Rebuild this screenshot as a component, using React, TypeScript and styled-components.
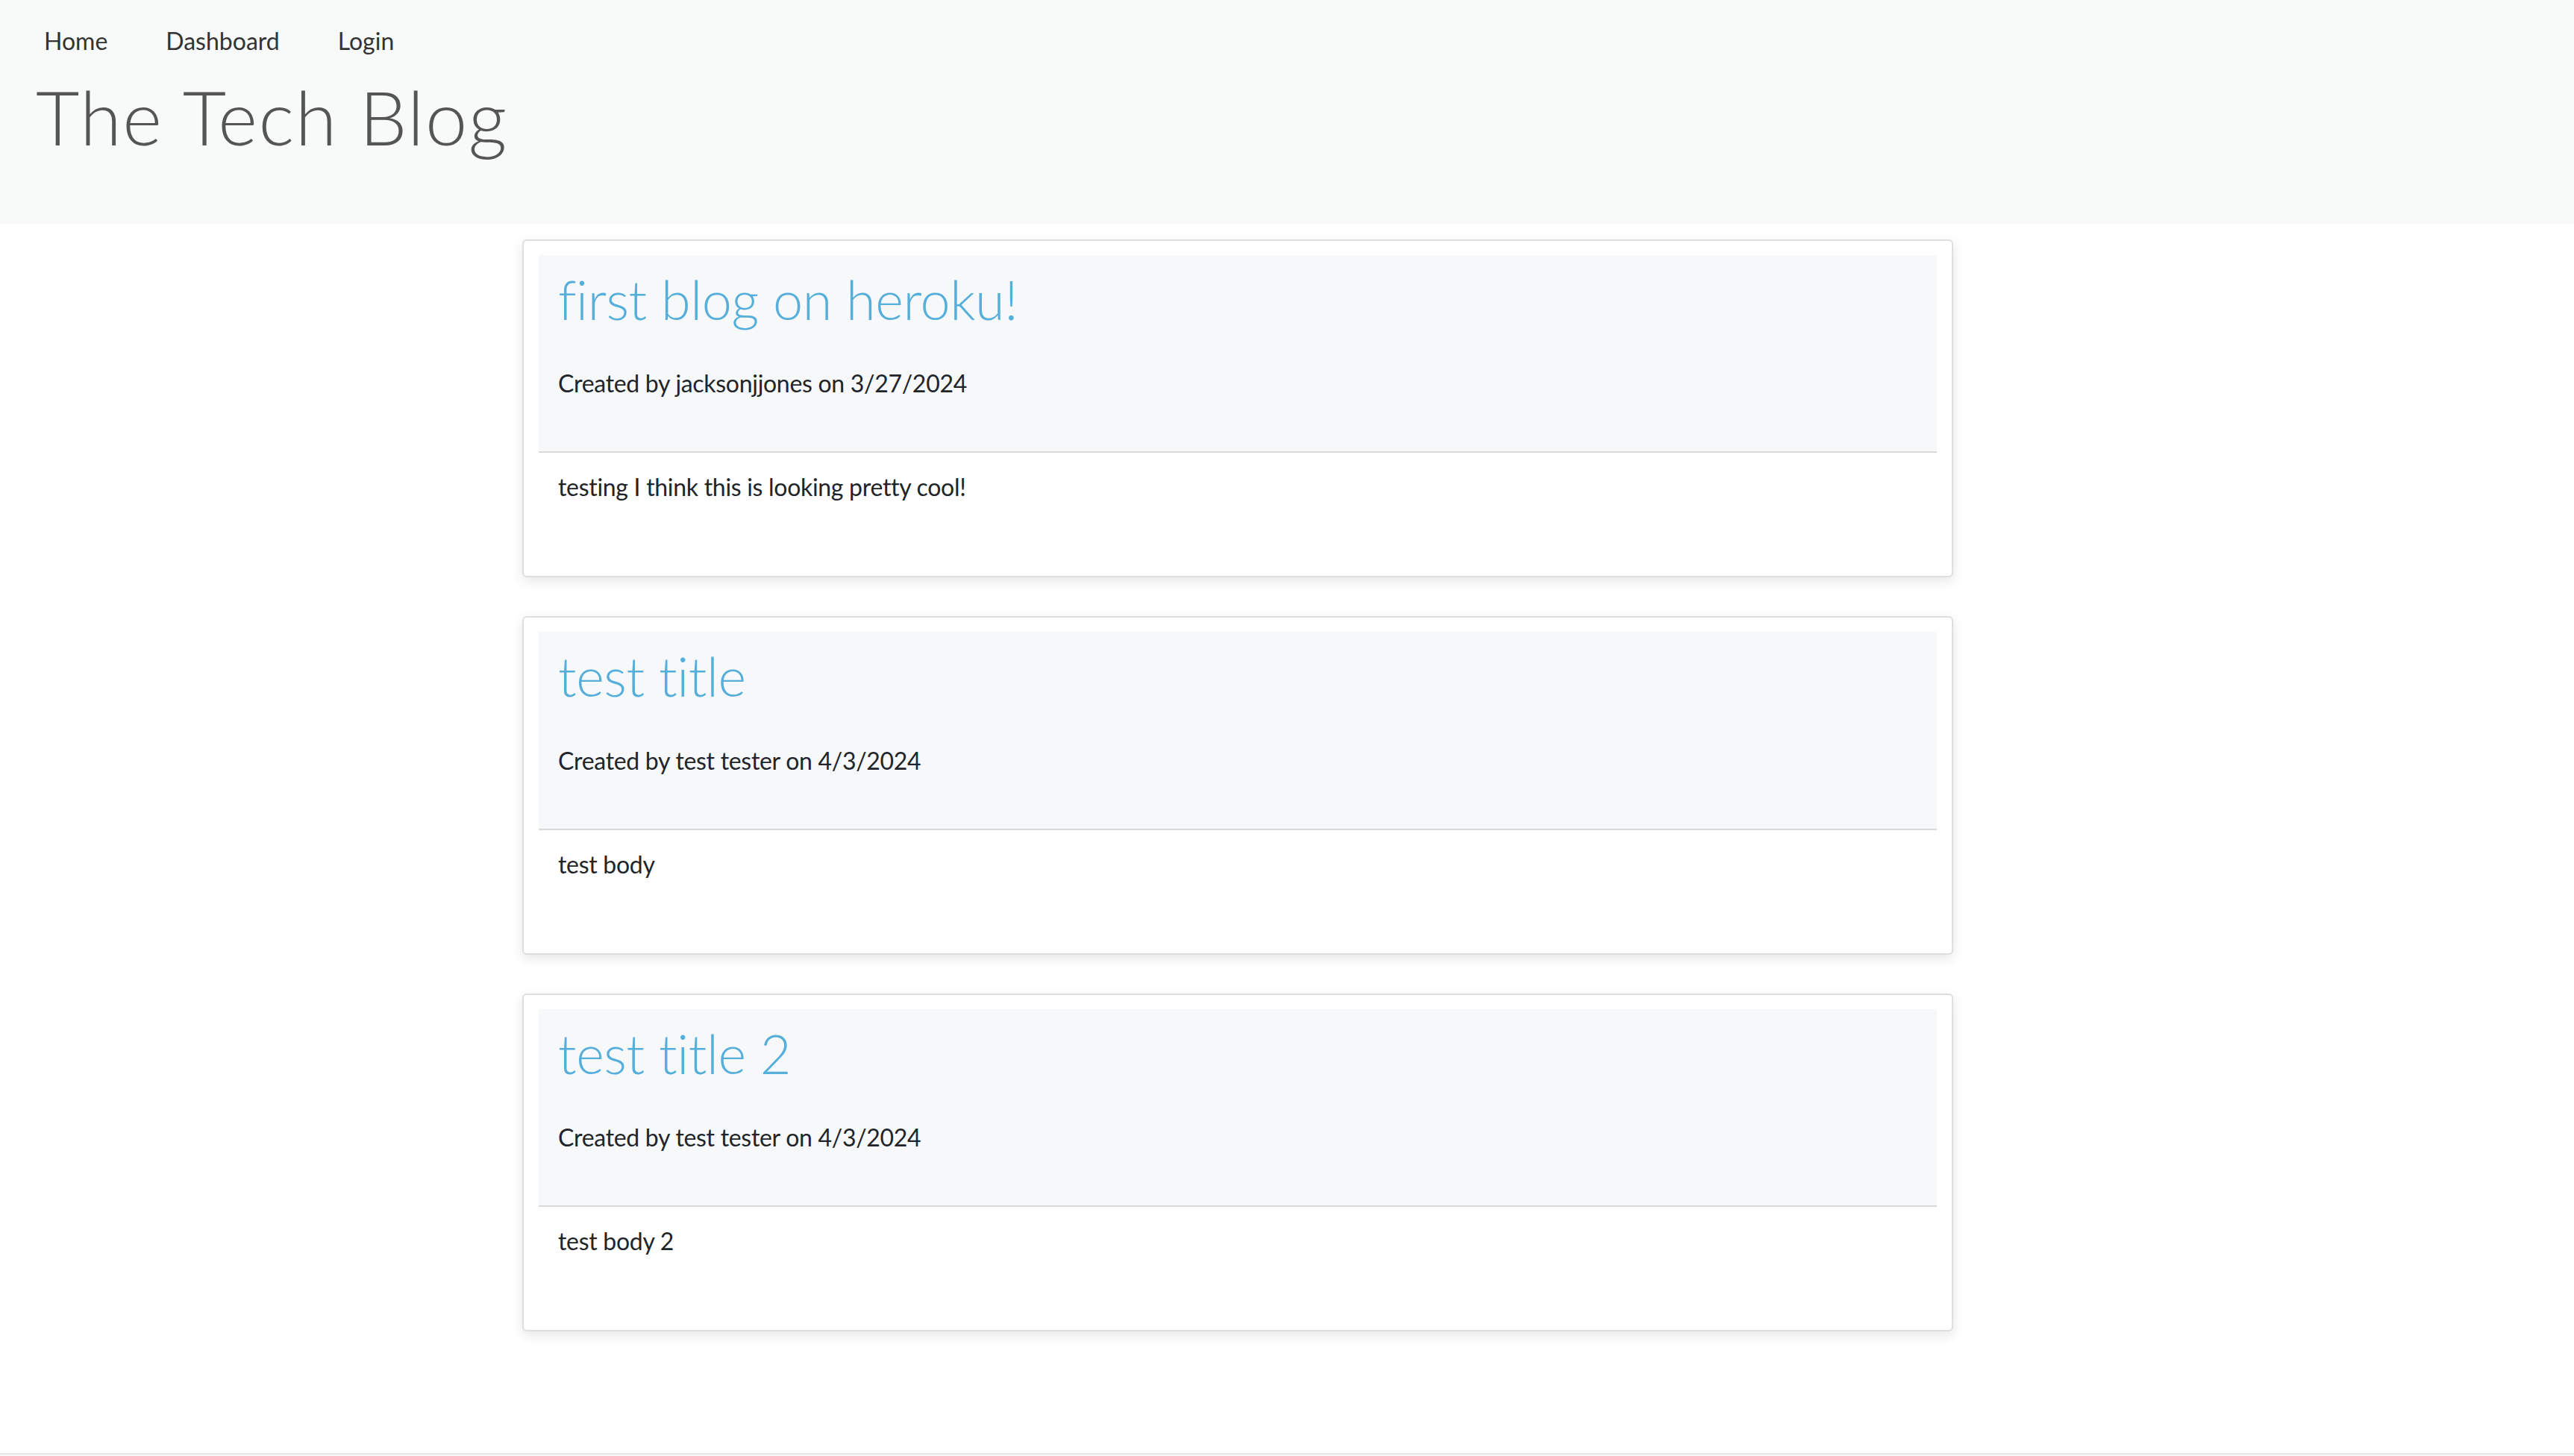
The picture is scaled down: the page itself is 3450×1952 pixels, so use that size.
import styled, { createGlobalStyle } from 'styled-components';

const GlobalStyle = createGlobalStyle`
  body {
    margin: 0;
    background: #ffffff;
    font-family: Lato, "Open Sans", sans-serif;
    font-variant-ligatures: none;
    color: #212529;
  }
`;

const Page = styled.div`
  min-height: 1952px;
  display: flex;
  flex-direction: column;
`;

const Header = styled.header`
  height: 300px;
  box-sizing: border-box;
  background-color: #f8f9f9;
  padding: 31px 0 0 0;
`;

const Nav = styled.nav`
  display: flex;
  gap: 78px;
  padding-left: 59px;
`;

const NavLink = styled.a`
  font-size: 32px;
  line-height: 48px;
  color: #333333;
  text-decoration: none;
`;

const SiteTitle = styled.h1`
  margin: 17px 0 0 0;
  padding-left: 48px;
  font-size: 101px;
  line-height: 1.2;
  font-weight: 300;
  letter-spacing: 1.6px;
  color: #555555;
`;

const Main = styled.main`
  display: flex;
  flex-direction: column;
  gap: 52px;
  width: 1918px;
  margin-left: 700px;
  padding: 21px 0 162px 0;
`;

const Card = styled.article`
  box-sizing: border-box;
  border: 2px solid #dedede;
  border-radius: 6px;
  padding: 19px 20px 0 20px;
  background: #ffffff;
  box-shadow: 0 5px 16px rgba(0, 0, 0, 0.1);
`;

const CardHeader = styled.div`
  background-color: #f7f8fa;
  border-bottom: 2px solid #d9d9d9;
  padding: 16px 26px 67px 26px;
`;

const CardTitle = styled.h2`
  margin: 0;
  font-size: 72px;
  line-height: 1.2;
  font-weight: 300;
  letter-spacing: -0.4px;
  color: #56afdb;
`;

const Meta = styled.p`
  margin: 46px 0 0 0;
  font-size: 32px;
  line-height: 48px;
  letter-spacing: -0.3px;
`;

const CardBody = styled.div`
  padding: 22px 26px 95px 26px;
  font-size: 32px;
  line-height: 48px;
  letter-spacing: -0.3px;
`;

const Footer = styled.footer`
  margin-top: auto;
  border-top: 2px solid #e6e6e6;
  background: #f7f7f7;
  height: 2px;
`;

const posts = [
  {
    title: 'first blog on heroku!',
    author: 'jacksonjjones',
    date: '3/27/2024',
    body: 'testing I think this is looking pretty cool!',
  },
  { title: 'test title', author: 'test tester', date: '4/3/2024', body: 'test body' },
  { title: 'test title 2', author: 'test tester', date: '4/3/2024', body: 'test body 2' },
];

export default function App() {
  return (
    <Page>
      <GlobalStyle />
      <Header>
        <Nav>
          <NavLink href="#">Home</NavLink>
          <NavLink href="#">Dashboard</NavLink>
          <NavLink href="#">Login</NavLink>
        </Nav>
        <SiteTitle>The Tech Blog</SiteTitle>
      </Header>
      <Main>
        {posts.map((p) => (
          <Card key={p.title}>
            <CardHeader>
              <CardTitle>{p.title}</CardTitle>
              <Meta>
                Created by {p.author} on {p.date}
              </Meta>
            </CardHeader>
            <CardBody>{p.body}</CardBody>
          </Card>
        ))}
      </Main>
      <Footer />
    </Page>
  );
}
